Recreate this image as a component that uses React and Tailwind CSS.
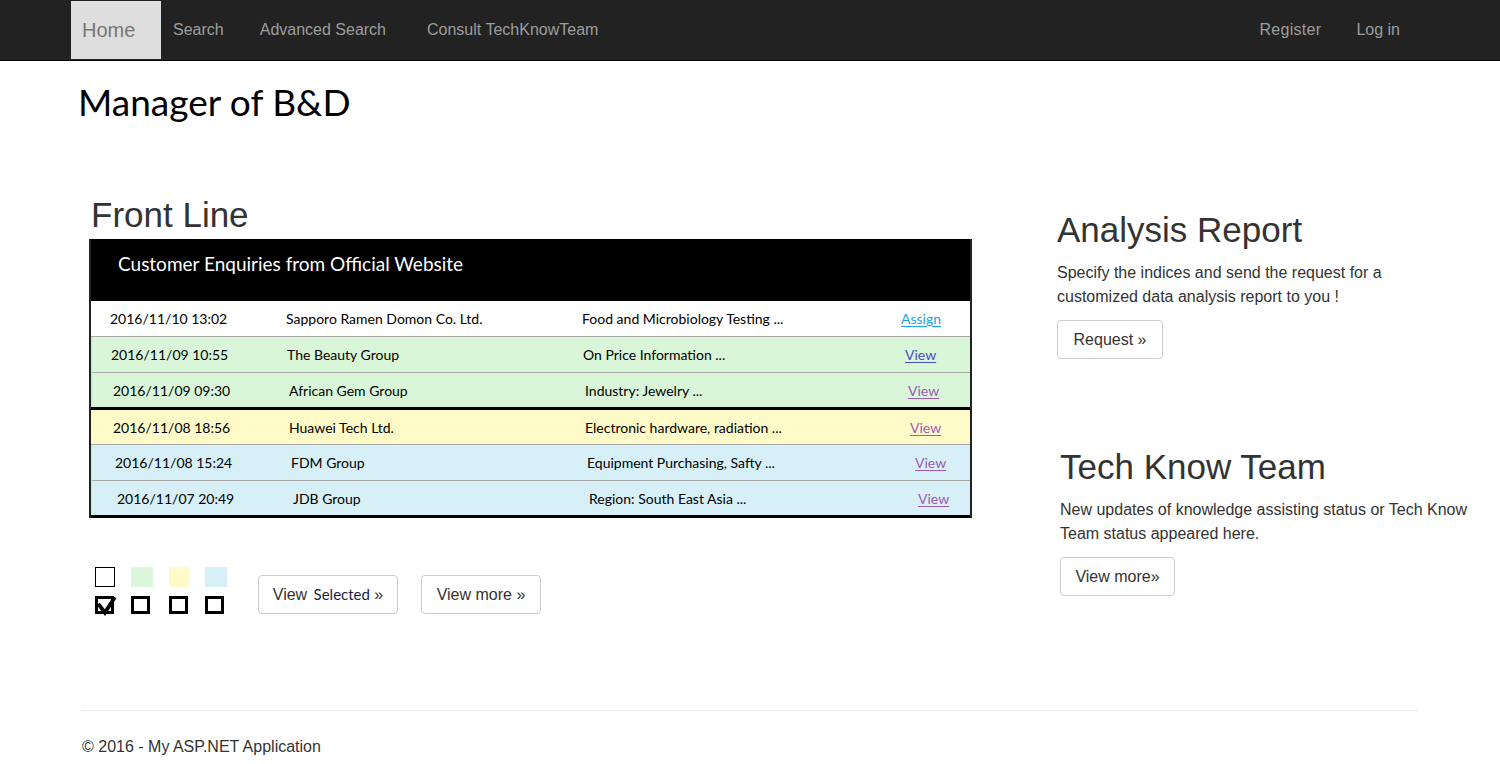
import React from "react";

const navLinks = ["Search", "Advanced Search", "Consult TechKnowTeam"];

const enquiries = [
  {
    date: "2016/11/10 13:02",
    company: "Sapporo Ramen Domon Co. Ltd.",
    topic: "Food and Microbiology Testing ...",
    action: "Assign",
    row: "bg-white pl-[19px] h-[36px] border-b border-[#a8a8a8]",
    link: "text-[#1aa3e0] decoration-[#1aa3e0]",
  },
  {
    date: "2016/11/09 10:55",
    company: "The Beauty Group",
    topic: "On Price Information ...",
    action: "View",
    row: "bg-[#d9f6d9] pl-[18px] h-[36px] border-b border-[#a8a8a8] border-l-2 border-l-[#c9efd4]",
    link: "text-[#4b4bc6] decoration-[#4b4bc6] ml-[3px]",
  },
  {
    date: "2016/11/09 09:30",
    company: "African Gem Group",
    topic: "Industry: Jewelry ...",
    action: "View",
    row: "bg-[#d9f6d9] pl-[20px] h-[34px] border-l-2 border-l-[#c3efd2]",
    link: "text-[#9b5bb2] decoration-[#9b5bb2] ml-[4px]",
  },
  {
    date: "2016/11/08 18:56",
    company: "Huawei Tech Ltd.",
    topic: "Electronic hardware, radiation ...",
    action: "View",
    row: "bg-[#fffbc8] pl-[22px] h-[38px] border-t-[3px] border-t-black border-b border-[#a8a8a8]",
    link: "text-[#a05ab6] decoration-[#a05ab6] ml-[6px]",
  },
  {
    date: "2016/11/08 15:24",
    company: "FDM Group",
    topic: "Equipment Purchasing, Safty ...",
    action: "View",
    row: "bg-[#d7eff6] pl-[22px] h-[36px] border-b border-[#a8a8a8] border-l-2 border-l-[#cdeee0]",
    link: "text-[#a05ab6] decoration-[#a05ab6] ml-[9px]",
  },
  {
    date: "2016/11/07 20:49",
    company: "JDB Group",
    topic: "Region: South East Asia ...",
    action: "View",
    row: "bg-[#d7eff6] pl-[24px] h-[34px] border-l-2 border-l-[#cdeee0]",
    link: "text-[#a05ab6] decoration-[#a05ab6] ml-[10px]",
  },
];

const legend = [
  { swatch: "bg-white border border-black w-[20px]", checked: true },
  { swatch: "bg-[#dcf7dc] w-[22px]", checked: false },
  { swatch: "bg-[#fffbc8] w-[20px]", checked: false },
  { swatch: "bg-[#d7eff6] w-[22px]", checked: false },
];

const Button = ({ children, className }) => (
  <button
    type="button"
    className={`h-[39px] border border-[#ccc] rounded-[4px] bg-white text-[16px] text-[#333] ${className}`}
  >
    {children}
  </button>
);

const App = () => {
  return (
    <div className="min-h-[764px] bg-white font-['Liberation_Sans',Arial,sans-serif] text-[#333]">
      {/* Navbar */}
      <nav className="h-[61px] bg-[#222] border-b border-[#080808] flex items-start">
        <div className="flex items-center h-[60px]">
          <a className="ml-[71px] w-[90px] h-[58px] bg-[#dedede] text-[#777] text-[20px] pl-[11px] flex items-center">
            Home
          </a>
          <div className="flex items-center ml-[12px] text-[16px] text-[#9d9d9d]">
            <a>{navLinks[0]}</a>
            <a className="ml-[36px]">{navLinks[1]}</a>
            <a className="ml-[41px]">{navLinks[2]}</a>
          </div>
        </div>
        <div className="ml-auto mr-[100px] h-[60px] flex items-center gap-[35px] text-[16px] text-[#9d9d9d]">
          <a className="tracking-[0.3px]">Register</a>
          <a>Log in</a>
        </div>
      </nav>

      <h1 className="pl-[78px] pt-[21px] text-[37px] leading-[40px] text-black font-['Lato',sans-serif]">
        Manager of B&amp;D
      </h1>

      <div className="flex mt-[73px]">
        {/* Front line */}
        <div className="ml-[89px] w-[883px]">
          <h2 className="pl-[2px] text-[35px] leading-[40px]">Front Line</h2>
          <div className="mt-[4px] border-x-2 border-x-[#222] font-['Lato',sans-serif] text-black text-[14px]">
            <div className="h-[62px] bg-black text-white text-[19px] pl-[27px] pt-[11px]">
              Customer Enquiries from Official Website
            </div>
            {enquiries.map((e) => (
              <div
                key={e.date}
                className={`grid grid-cols-[176px_296px_319px_1fr] items-center ${e.row}`}
              >
                <span>{e.date}</span>
                <span>{e.company}</span>
                <span>{e.topic}</span>
                <a className={`underline underline-offset-2 ${e.link}`}>{e.action}</a>
              </div>
            ))}
            <div className="h-[3px] bg-black" />
          </div>

          <div className="flex items-center mt-[49px]">
            <div className="ml-[6px] grid grid-cols-[20px_22px_20px_22px] gap-x-[16px] gap-y-[9px]">
              {legend.map((l, i) => (
                <div key={i} className={`h-[20px] ${l.swatch}`} />
              ))}
              {legend.map((l, i) => (
                <div
                  key={i}
                  className="relative w-[19px] h-[18px] border-[3px] border-black"
                >
                  {l.checked && (
                    <svg
                      viewBox="0 0 20 20"
                      className="absolute -left-[3px] -top-[5px] w-[22px] h-[22px]"
                    >
                      <path
                        d="M3 9 L9 17 L18 3"
                        fill="none"
                        stroke="black"
                        strokeWidth="3.5"
                      />
                    </svg>
                  )}
                </div>
              ))}
            </div>
            <Button className="ml-[31px] w-[140px] mt-[8px]">
              View{" "}
              <span className="font-['Lato',sans-serif] text-[15px] text-[#1b1b4d] ml-[2px]">
                Selected
              </span>{" "}
              »
            </Button>
            <Button className="ml-[23px] w-[120px] mt-[8px]">View more »</Button>
          </div>
        </div>

        {/* Right column */}
        <div className="ml-[85px] w-[440px]">
          <h2 className="mt-[15px] text-[35px] leading-[40px]">Analysis Report</h2>
          <p className="mt-[11px] w-[430px] text-[16px] leading-[24px]">
            Specify the indices and send the request for a
            <br />
            customized data analysis report to you !
          </p>
          <Button className="mt-[11px] w-[106px] h-[38px]">Request »</Button>

          <div className="ml-[3px]">
            <h2 className="mt-[88px] text-[35px] leading-[40px]">Tech Know Team</h2>
            <p className="mt-[11px] w-[430px] text-[16px] leading-[24px]">
              New updates of knowledge assisting status or Tech Know Team status
              appeared here.
            </p>
            <Button className="mt-[11px] w-[115px] h-[38px]">View more»</Button>
          </div>
        </div>
      </div>

      <footer className="mx-[82px] mt-[96px] border-t border-[#eee] pt-[24px]">
        <p className="text-[16px] leading-[24px]">© 2016 - My ASP.NET Application</p>
      </footer>
    </div>
  );
};

export default App;
